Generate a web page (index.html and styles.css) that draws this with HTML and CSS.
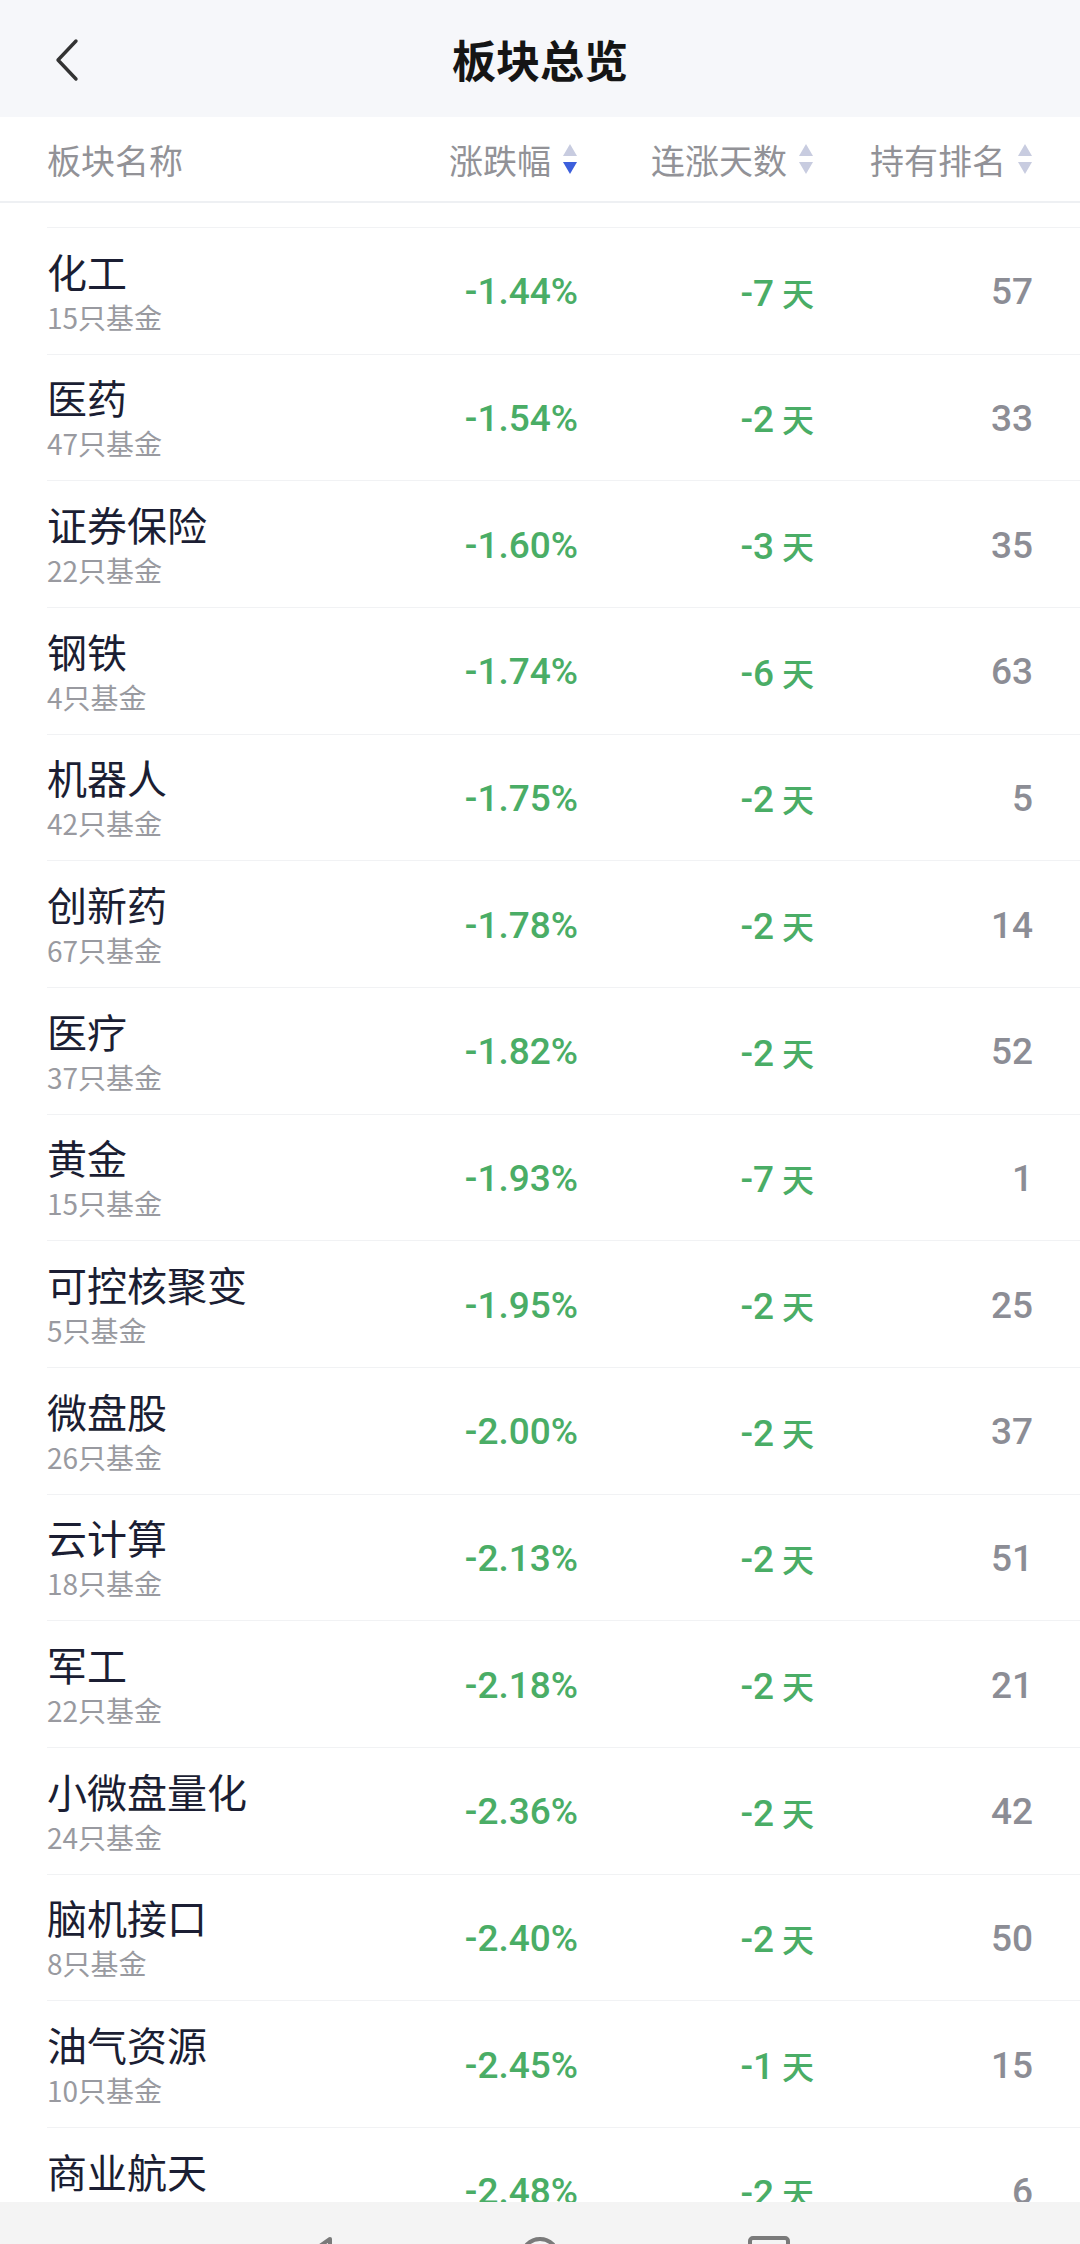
FILE: index.html
```html
<!DOCTYPE html>
<html lang="zh-CN">
<head>
<meta charset="utf-8" />
<title>板块总览</title>
<link rel="stylesheet" href="styles.css">
</head>
<body>
	<div class="topbar">
		<div class="back">
			<svg width="30" height="44" viewBox="0 0 30 44"><path d="M24 3 L6 22 L24 41" fill="none" stroke="#333" stroke-width="3.4" stroke-linecap="round" stroke-linejoin="round"/></svg>
		</div>
		<div class="title">板块总览</div>
		<div></div>
	</div>
	<div class="thead">
		<div class="th th-name">板块名称</div>
		<div class="th">涨跌幅<span class="sort down"><i class="up"></i><i class="dn"></i></span></div>
		<div class="th">连涨天数<span class="sort"><i class="up"></i><i class="dn"></i></span></div>
		<div class="th">持有排名<span class="sort"><i class="up"></i><i class="dn"></i></span></div>
	</div>
	<ul class="list">
		<li class="row"><div class="name"><b>化工</b><span>15只基金</span></div><div class="pct">-1.44%</div><div class="days">-7<em>天</em></div><div class="rank">57</div></li>
		<li class="row"><div class="name"><b>医药</b><span>47只基金</span></div><div class="pct">-1.54%</div><div class="days">-2<em>天</em></div><div class="rank">33</div></li>
		<li class="row"><div class="name"><b>证券保险</b><span>22只基金</span></div><div class="pct">-1.60%</div><div class="days">-3<em>天</em></div><div class="rank">35</div></li>
		<li class="row"><div class="name"><b>钢铁</b><span>4只基金</span></div><div class="pct">-1.74%</div><div class="days">-6<em>天</em></div><div class="rank">63</div></li>
		<li class="row"><div class="name"><b>机器人</b><span>42只基金</span></div><div class="pct">-1.75%</div><div class="days">-2<em>天</em></div><div class="rank">5</div></li>
		<li class="row"><div class="name"><b>创新药</b><span>67只基金</span></div><div class="pct">-1.78%</div><div class="days">-2<em>天</em></div><div class="rank">14</div></li>
		<li class="row"><div class="name"><b>医疗</b><span>37只基金</span></div><div class="pct">-1.82%</div><div class="days">-2<em>天</em></div><div class="rank">52</div></li>
		<li class="row"><div class="name"><b>黄金</b><span>15只基金</span></div><div class="pct">-1.93%</div><div class="days">-7<em>天</em></div><div class="rank">1</div></li>
		<li class="row"><div class="name"><b>可控核聚变</b><span>5只基金</span></div><div class="pct">-1.95%</div><div class="days">-2<em>天</em></div><div class="rank">25</div></li>
		<li class="row"><div class="name"><b>微盘股</b><span>26只基金</span></div><div class="pct">-2.00%</div><div class="days">-2<em>天</em></div><div class="rank">37</div></li>
		<li class="row"><div class="name"><b>云计算</b><span>18只基金</span></div><div class="pct">-2.13%</div><div class="days">-2<em>天</em></div><div class="rank">51</div></li>
		<li class="row"><div class="name"><b>军工</b><span>22只基金</span></div><div class="pct">-2.18%</div><div class="days">-2<em>天</em></div><div class="rank">21</div></li>
		<li class="row"><div class="name"><b>小微盘量化</b><span>24只基金</span></div><div class="pct">-2.36%</div><div class="days">-2<em>天</em></div><div class="rank">42</div></li>
		<li class="row"><div class="name"><b>脑机接口</b><span>8只基金</span></div><div class="pct">-2.40%</div><div class="days">-2<em>天</em></div><div class="rank">50</div></li>
		<li class="row"><div class="name"><b>油气资源</b><span>10只基金</span></div><div class="pct">-2.45%</div><div class="days">-1<em>天</em></div><div class="rank">15</div></li>
		<li class="row"><div class="name"><b>商业航天</b><span>9只基金</span></div><div class="pct">-2.48%</div><div class="days">-2<em>天</em></div><div class="rank">6</div></li>
	</ul>
	<div class="navbar">
		<svg class="nav-ico" width="40" height="44" viewBox="0 0 40 44"><path d="M32 4 L6 22 L32 40 Z" fill="none" stroke="#7a7a7a" stroke-width="4" stroke-linejoin="round"/></svg>
		<svg class="nav-ico" width="44" height="44" viewBox="0 0 44 44"><circle cx="22" cy="22" r="18" fill="none" stroke="#7a7a7a" stroke-width="4"/></svg>
		<svg class="nav-ico" width="44" height="44" viewBox="0 0 44 44"><rect x="3" y="3" width="38" height="38" rx="3" fill="none" stroke="#7a7a7a" stroke-width="4"/></svg>
	</div>
</body>
</html>
```

FILE: styles.css
```css
*{margin:0;padding:0;box-sizing:border-box;}
html,body{background:#fff;}
body{font-family:Roboto,"Noto Sans CJK SC",sans-serif;color:#1b1e33;overflow:hidden;height:2244px;}
ul{list-style:none;}

.topbar{height:117px;background:#f6f7fa;display:grid;grid-template-columns:200px 1fr 200px;align-items:center;}
.back{padding-left:52px;padding-top:2px;display:flex;align-items:center;}
.title{text-align:center;font-family:"Noto Sans CJK SC",sans-serif;font-size:44px;font-weight:700;color:#151515;}

.thead{height:86px;border-bottom:2px solid #eef0f3;display:grid;grid-template-columns:1fr 200px 236px 219px;align-items:center;padding:0 47px;}
.th{font-family:"Noto Sans CJK SC",sans-serif;font-size:34px;color:#929297;text-align:right;display:flex;justify-content:flex-end;align-items:center;}
.th-name{justify-content:flex-start;}
.sort{display:inline-flex;flex-direction:column;gap:6px;margin-left:12px;width:15px;}
.sort i{display:block;width:0;height:0;border-left:7.5px solid transparent;border-right:7.5px solid transparent;}
.sort .up{border-bottom:12px solid #c8cce0;}
.sort .dn{border-top:12px solid #c8cce0;}
.sort.down .dn{border-top-color:#3c5fdc;}

.list{padding-top:24px;}
.row{height:126.67px;margin-left:47px;padding-right:47px;border-top:1px solid #f1f2f4;display:grid;grid-template-columns:1fr 200px 236px 219px;align-items:center;}
.name b{display:block;font-family:"Noto Sans CJK SC",sans-serif;font-weight:400;font-size:40px;line-height:46px;color:#1b1e33;}
.name span{display:block;font-family:"Noto Sans CJK SC",sans-serif;font-size:28px;line-height:34px;margin-top:6px;color:#999aa0;}
.pct,.days,.rank{text-align:right;font-size:37px;font-weight:500;padding-top:2px;}
.pct,.days{color:#4aad66;}
.days em{font-style:normal;font-family:"Noto Sans CJK SC",sans-serif;font-size:32px;margin-left:8px;}
.rank{color:#8c8d95;}

.navbar{position:fixed;left:0;right:0;bottom:0;height:42px;background:#f4f4f4;overflow:hidden;}
.nav-ico{position:absolute;top:33px;}
.nav-ico:nth-child(1){left:298px;}
.nav-ico:nth-child(2){left:518px;}
.nav-ico:nth-child(3){left:747px;}
```
